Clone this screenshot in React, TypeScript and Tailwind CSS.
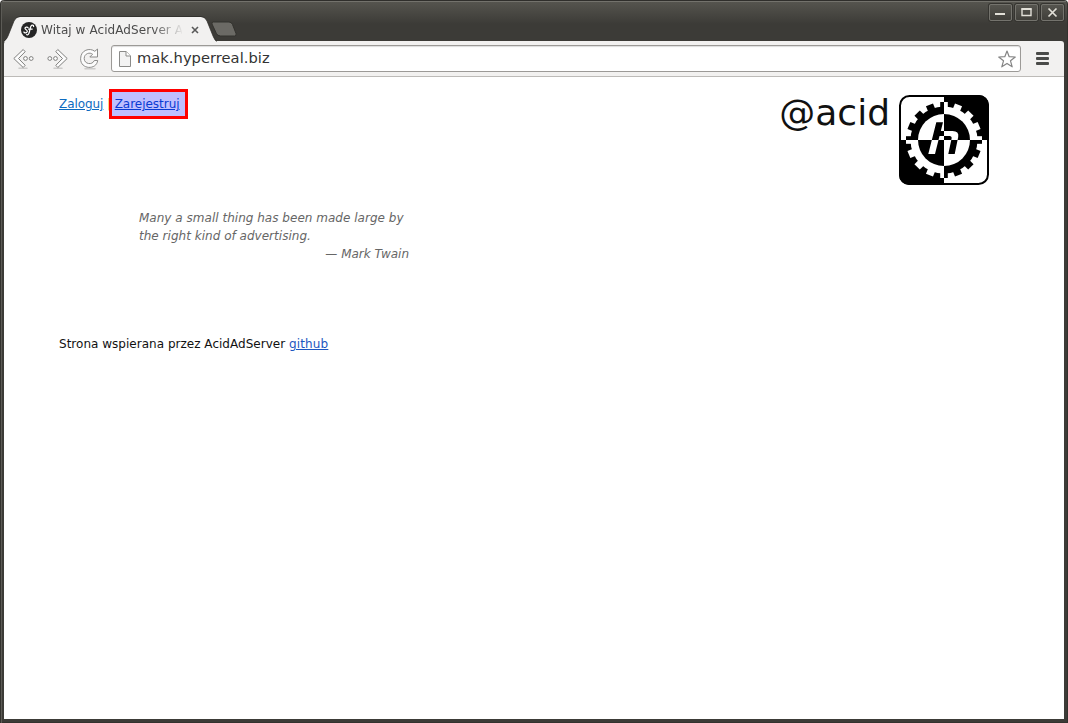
import React from 'react';

const teeth = Array.from({ length: 16 }, (_, i) => i * 22.5);

function Gear({ fg, bg, clip }: { fg: string; bg: string; clip: string }) {
  return (
    <g clipPath={`url(#${clip})`}>
      <rect width="90" height="90" fill={bg} />
      <g fill={fg}>
        <circle cx="45" cy="45" r="33.5" />
        {teeth.map((a) => (
          <rect key={a} x="41.2" y="7" width="7.6" height="8" transform={`rotate(${a} 45 45)`} />
        ))}
      </g>
      <circle cx="45" cy="45" r="26" fill={bg} />
      <path
        d="M37.3 27.3H44L41.8 36H53.5Q60.3 36 59.2 42L55.7 59H49.3L52.6 43.5Q53 41 50.5 41H40.5L36 59H29.3Z"
        fill={fg}
      />
    </g>
  );
}

function Logo() {
  return (
    <svg className="h-[90px] w-[90px] shrink-0" viewBox="0 0 90 90">
      <defs>
        <clipPath id="frame"><rect width="90" height="90" rx="10" /></clipPath>
        <clipPath id="light"><path d="M0 0H45V45H0ZM45 45H90V90H45Z" /></clipPath>
        <clipPath id="dark"><path d="M45 0H90V45H45ZM0 45H45V90H0Z" /></clipPath>
      </defs>
      <g clipPath="url(#frame)">
        <Gear fg="#000" bg="#fff" clip="light" />
        <Gear fg="#fff" bg="#000" clip="dark" />
      </g>
      <rect x="1" y="1" width="88" height="88" rx="9.5" fill="none" stroke="#000" strokeWidth="2" />
    </svg>
  );
}

function WindowButton({ children }: { children: React.ReactNode }) {
  return (
    <div className="h-[17px] w-[23px] rounded-[2px] border border-[#74736d] bg-linear-to-b from-[#55544e] to-[#403f3a] shadow-[0_0_0_1px_#353430]">
      <svg className="block h-[15px] w-[21px]" viewBox="0 0 21 15" fill="none" stroke="#e2e0d8" strokeWidth="2">
        {children}
      </svg>
    </div>
  );
}

function TitleBar() {
  return (
    <div className="relative flex h-[41px] shrink-0 justify-between">
      <div className="flex">
        <div className="relative mt-4 h-[25px] w-[213px]">
          <svg className="absolute left-0 top-0 h-[26px] w-[213px]" viewBox="0 0 213 26">
            <path d="M0 26Q3 23 4 20L10 5Q12 1 16 1H197Q201 1 203 5L209 20Q211 25 213 26Z" fill="#f2f1f0" />
            <path d="M0 25Q3 23 4 20L10 5Q12 .5 16 .5H197Q201 .5 203 5L209 20Q211 25 213 25.5" fill="none" stroke="#2b2a27" strokeOpacity=".7" />
          </svg>
          <div className="relative flex h-[27px] items-center pl-[17px]">
            <svg className="h-4 w-4 shrink-0" viewBox="0 0 16 16">
              <circle cx="8" cy="8" r="8" fill="#252525" />
              <path d="M7 5.6C6.4 4.6 3.8 5 4 6.5C4.2 7.8 6.6 8 6.3 9.5C6 11.1 3.3 11.4 2.9 10M12.6 4.5C12.7 3 10.8 2.6 9.9 4.2C9 6 8.8 9.8 7.6 12C7 13.1 5.8 13.2 5.7 12.3M7.5 7H11.2" fill="none" stroke="#fff" strokeWidth="1.25" strokeLinecap="round" />
            </svg>
            <span className="ml-1 w-[141px] whitespace-nowrap text-[12px] tracking-[0.08px] text-[#4c4c4c] mask-[linear-gradient(to_right,#000_112px,transparent_143px)]">
              Witaj w AcidAdServer A
            </span>
            <svg className="ml-[9px] h-2 w-2 shrink-0" viewBox="0 0 8 8">
              <path d="M1 1L7 7M7 1L1 7" stroke="#595959" strokeWidth="1.6" />
            </svg>
          </div>
        </div>
        <svg className="-ml-[7px] mt-[21px] h-4 w-[27px]" viewBox="0 0 27 16">
          <path d="M3.5 1H19Q21.5 1 22.5 3.5L26 12.5Q26.7 15 24.5 15H10.5Q7.5 15 6.3 12.3L2 3Q1.3 1 3.5 1Z" fill="#6b6a65" stroke="#33322e" />
        </svg>
      </div>
      <div className="mt-1 flex gap-[3px]">
        <WindowButton><path d="M5 9H15" /></WindowButton>
        <WindowButton><path d="M6 4H15V10.5H6Z" strokeWidth="1.4" /><path d="M5.5 4H15.5" /></WindowButton>
        <WindowButton><path d="M6.5 3.5L14.5 11.5M14.5 3.5L6.5 11.5" strokeWidth="1.7" /></WindowButton>
      </div>
    </div>
  );
}

function HistoryArrow({ flip = false }: { flip?: boolean }) {
  return (
    <svg className={flip ? 'h-[22px] w-[22px] -scale-x-100' : 'h-[22px] w-[22px]'} viewBox="0 0 22 22">
      <path d="M6 20.3H14" stroke="#a8a8a6" strokeWidth="1.5" opacity=".5" strokeLinecap="round" />
      <path d="M10.2 1.5L12.2 3.7L5.5 10.5L12.2 17.3L10.2 19.5L.8 10.5Z" fill="#fcfcfc" stroke="#7f7f7d" strokeLinejoin="round" />
      <circle cx="12.5" cy="10.5" r="1.9" fill="#fcfcfc" stroke="#7f7f7d" />
      <circle cx="18.2" cy="10.5" r="1.9" fill="#fcfcfc" stroke="#7f7f7d" />
    </svg>
  );
}

function Toolbar() {
  return (
    <div className="flex h-9 shrink-0 items-center rounded-t-[3px] border-b border-[#bdbbb8] bg-[#f2f1f0] pl-[9px]">
      <HistoryArrow />
      <div className="ml-[11px] h-[22px]"><HistoryArrow flip /></div>
      <svg className="ml-[11px] h-[22px] w-[22px]" viewBox="0 0 22 22">
        <path d="M6 20.7H16" stroke="#a8a8a6" strokeWidth="1.5" opacity=".5" strokeLinecap="round" />
        <path d="M15.8 3.3L18.5 1V9H10.8L13.6 6.2C11 4 5.2 5.3 5.2 10.5C5.2 16.3 13.4 17.4 15.3 12.5H18.7C17.5 22.2 1.6 21.7 1.6 10.8C1.6 1.9 10.8-.6 15.8 3.3Z" fill="#fcfcfc" stroke="#8b8b89" strokeLinejoin="round" />
      </svg>
      <div className="ml-[10px] flex h-[27px] w-[910px] items-center rounded-[3px] border border-[#9c9a97] bg-white pl-[7px] pr-[4px] shadow-[inset_0_1px_1px_#dddddd]">
        <svg className="h-4 w-3" viewBox="0 0 12 16">
          <path d="M.5 .5H7.2L11.5 5V15.5H.5Z" fill="#f3f3f3" stroke="#8b8b89" />
          <path d="M7 .5V5H11.5" fill="#fff" stroke="#8b8b89" />
        </svg>
        <span className="relative -top-px ml-[6px] flex-1 text-[14.67px] leading-5 tracking-[0.04px] text-[#333333]">mak.hyperreal.biz</span>
        <svg className="h-[18px] w-[18px]" viewBox="0 0 18 18">
          <path d="M9 1L11.2 6.7L17.3 7L12.5 10.8L14.2 16.8L9 13.4L3.8 16.8L5.5 10.8L.7 7L6.8 6.7Z" fill="#fff" stroke="#858585" strokeWidth="1.2" strokeLinejoin="round" />
        </svg>
      </div>
      <div className="ml-[15px] flex flex-col gap-[2px]">
        <span className="h-[3px] w-[13px] rounded-[1px] bg-[#4a4b49]" />
        <span className="h-[3px] w-[13px] rounded-[1px] bg-[#4a4b49]" />
        <span className="h-[3px] w-[13px] rounded-[1px] bg-[#4a4b49]" />
      </div>
    </div>
  );
}

export default function App() {
  return (
    <div className="flex h-[723px] w-[1068px] flex-col overflow-hidden rounded-t-[4px] bg-[#3c3b37] bg-[linear-gradient(to_bottom,#2f2e2b_0px,#2f2e2b_1px,#73726c_1px,#73726c_2px,#55544e_2px,#3c3b37_24px)] px-1 pb-1 font-['DejaVu_Sans',sans-serif] shadow-[inset_1px_0_#33322e,inset_2px_0_#5c5b56,inset_-1px_0_#33322e,inset_0_-1px_#33322e]">
      <TitleBar />
      <Toolbar />
      <div className="flex-1 bg-white pl-[55px] pr-[75px] pt-[18px] text-[12px] leading-[18px] text-[#111111]">
        <div className="flex justify-between">
          <nav className="flex h-[18px] whitespace-pre">
            <a className="tracking-[-0.06px] text-[#0d6bc0] underline">Zaloguj</a>
            <span className="text-[#d2691e]"> | </span>
            <span className="relative -ml-[0.4px]">
              <a className="tracking-[-0.03px] text-[#0d4fc4] underline">Zarejestruj</a>
              <span className="absolute -left-[5.5px] -top-[6px] h-[30px] w-[79px] border-3 border-[#ff0000] bg-[#0000ff]/25" />
            </span>
          </nav>
          <div className="flex gap-[9px]">
            <h1 className="text-[36px] leading-9 text-[#111111]">@acid</h1>
            <Logo />
          </div>
        </div>
        <blockquote className="ml-20 mt-6 w-[270px] italic text-[#666666]">
          <p className="tracking-[0.02px]">Many a small thing has been made large by the right kind of advertising.</p>
          <p className="text-right">— Mark Twain</p>
        </blockquote>
        <footer className="mt-[72px] tracking-[0.02px]">
          Strona wspierana przez AcidAdServer <a className="tracking-[0.15px] text-[#1d57c0] underline">github</a>
        </footer>
      </div>
    </div>
  );
}
